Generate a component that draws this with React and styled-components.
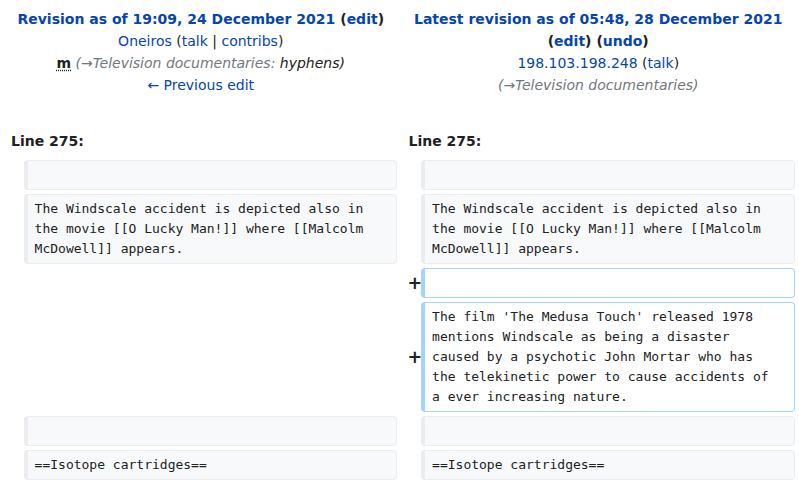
import styled, { createGlobalStyle } from 'styled-components';

const GlobalStyle = createGlobalStyle`
  html, body {
    margin: 0;
    padding: 0;
    background: #fff;
  }
  body {
    font-family: "DejaVu Sans", sans-serif;
    font-size: 14px;
    color: #202122;
  }
`;

const DiffGrid = styled.div`
  display: grid;
  grid-template-columns: 2fr 48fr 2fr 48fr;
  column-gap: 4px;
  row-gap: 4px;
  padding: 4px;
  width: 799px;
  box-sizing: border-box;
`;

const TitleCell = styled.div`
  grid-column: span 2;
  padding: 4px 7px;
  text-align: center;
  line-height: 22px;
`;

const TitleLine = styled.div`
  font-weight: ${p => (p.bold ? 'bold' : 'normal')};
`;

const A = styled.a`
  color: #0645ad;
  text-decoration: none;
`;

const Minor = styled.abbr`
  font-weight: bold;
  text-decoration: underline dotted;
  text-underline-offset: 2px;
  cursor: help;
`;

const Comment = styled.span`
  font-style: italic;
  color: ${p => (p.dim ? '#72777d' : '#202122')};
`;

const LineNo = styled.div`
  grid-column: span 2;
  padding: 4px 7px;
  margin-top: 22px;
  font-weight: bold;
  line-height: 22px;
`;

const Marker = styled.div`
  display: flex;
  align-items: center;
  justify-content: flex-end;
  margin-right: -5px;
  font-weight: bold;
  font-size: 17.5px;
  line-height: 1.2;
`;

const Line = styled.div`
  font-family: "DejaVu Sans Mono", monospace;
  font-size: 13px;
  line-height: 20px;
  min-height: 20px;
  white-space: pre-wrap;
  padding: 4px 7px;
  border-style: solid;
  border-width: 1px 1px 1px 4px;
  border-radius: 4px;
  border-color: ${p => (p.added ? '#a3d3ff' : '#eaecf0')};
  background: ${p => (p.added ? '#ffffff' : '#f8f9fa')};
  color: #202122;
`;

const Empty = styled.div``;

const rows = [
  { left: '', right: '' },
  {
    left: 'The Windscale accident is depicted also in\nthe movie [[O Lucky Man!]] where [[Malcolm\nMcDowell]] appears.',
    right: 'The Windscale accident is depicted also in\nthe movie [[O Lucky Man!]] where [[Malcolm\nMcDowell]] appears.',
  },
  { added: '' },
  {
    added:
      "The film 'The Medusa Touch' released 1978\nmentions Windscale as being a disaster\ncaused by a psychotic John Mortar who has\nthe telekinetic power to cause accidents of\na ever increasing nature.",
  },
  { left: '', right: '' },
  { left: '==Isotope cartridges==', right: '==Isotope cartridges==' },
];

export default function App() {
  return (
    <>
      <GlobalStyle />
      <DiffGrid>
        <TitleCell>
          <TitleLine bold>
            <A href="#">Revision as of 19:09, 24 December 2021</A> (<A href="#">edit</A>)
          </TitleLine>
          <TitleLine>
            <A href="#">Oneiros</A> (<A href="#">talk</A> | <A href="#">contribs</A>)
          </TitleLine>
          <TitleLine>
            <Minor title="This is a minor edit">m</Minor>{' '}
            <Comment dim>(→Television documentaries: </Comment>
            <Comment>hyphens)</Comment>
          </TitleLine>
          <TitleLine>
            <A href="#">← Previous edit</A>
          </TitleLine>
        </TitleCell>
        <TitleCell>
          <TitleLine bold>
            <A href="#">Latest revision as of 05:48, 28 December 2021</A>
          </TitleLine>
          <TitleLine bold>
            (<A href="#">edit</A>) (<A href="#">undo</A>)
          </TitleLine>
          <TitleLine>
            <A href="#">198.103.198.248</A> (<A href="#">talk</A>)
          </TitleLine>
          <TitleLine>
            <Comment dim>(→Television documentaries)</Comment>
          </TitleLine>
        </TitleCell>

        <LineNo>Line 275:</LineNo>
        <LineNo>Line 275:</LineNo>

        {rows.map((r, i) =>
          r.added !== undefined ? (
            <>
              <Empty key={`a${i}`} />
              <Empty key={`b${i}`} />
              <Marker key={`c${i}`}>+</Marker>
              <Line key={`d${i}`} added>{r.added}</Line>
            </>
          ) : (
            <>
              <Empty key={`a${i}`} />
              <Line key={`b${i}`}>{r.left}</Line>
              <Empty key={`c${i}`} />
              <Line key={`d${i}`}>{r.right}</Line>
            </>
          )
        )}
      </DiffGrid>
    </>
  );
}
